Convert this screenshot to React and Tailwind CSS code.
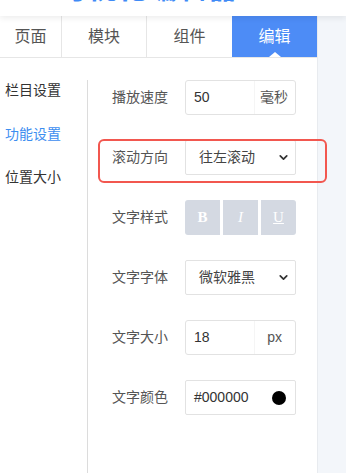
import { ChevronDown } from 'lucide-react'

const font = { fontFamily: '"Liberation Sans", "Noto Sans CJK SC", sans-serif' }

function Row({ label, children }) {
  return (
    <div className="flex items-center">
      <div className="w-[73px] text-[14px] text-[#555]">{label}</div>
      <div className="w-[111px] h-[35px]">{children}</div>
    </div>
  )
}

function UnitInput({ value, unit, pr }) {
  return (
    <div className="flex h-full border border-[#e2e2e2] rounded-[3px] text-[14px] text-[#333]">
      <div className="flex-1 flex items-center pl-[8px]">{value}</div>
      <div className={`w-[41px] flex items-center justify-end ${pr} border-l border-[#f5f5f5] text-[#555]`}>{unit}</div>
    </div>
  )
}

function FakeSelect({ value }) {
  return (
    <div className="flex items-center h-full border border-[#e2e2e2] rounded-[2px] pl-[13px] pr-[5px] text-[14px] text-[#444]">
      <span className="flex-1">{value}</span>
      <ChevronDown size={13} strokeWidth={3.2} className="text-[#333]" />
    </div>
  )
}

export default function App() {
  const tabs = [
    { name: '页面', w: 'w-[62px]' },
    { name: '模块', w: 'w-[85px]' },
    { name: '组件', w: 'w-[85px]' },
    { name: '编辑', w: 'w-[85px]', active: true }
  ]

  return (
    <div className="relative w-[346px] h-[473px] overflow-hidden bg-white flex flex-col" style={font}>
      <div className="relative z-10 h-4 overflow-hidden bg-white shadow-[0_2px_6px_rgba(0,0,0,0.08)]">
        <div className="mt-[-25px] pl-[58px] text-[29px] leading-[29px] font-bold text-[#3f8bf6] tracking-[1px] whitespace-nowrap">
          可视化编辑器
        </div>
      </div>

      <div className="flex flex-1">
        <div className="w-[317px] flex flex-col">
          <div className="flex h-[42px] border-b border-[#e6e6e6]">
            {tabs.map((t, i) => (
              <div
                key={t.name}
                className={`${t.w} relative flex items-center justify-center text-[16px] ${
                  t.active ? 'bg-[#4d8cf6] text-white' : 'text-[#555]'
                } ${i < 2 ? 'border-r border-[#e6e6e6]' : ''}`}
              >
                {t.name}
                {t.active && (
                  <div className="absolute bottom-0 left-1/2 -translate-x-1/2 w-0 h-0 border-x-[6px] border-x-transparent border-b-[5px] border-b-white" />
                )}
              </div>
            ))}
          </div>

          <div className="flex flex-1">
            <div className="w-[88px] mt-[22px] border-r border-[#dcdcdc] flex flex-col gap-[23.5px] pl-[5px] text-[14px] leading-[20px] text-[#333]">
              <div>栏目设置</div>
              <div className="text-[#3d8ef0]">功能设置</div>
              <div>位置大小</div>
            </div>

            <div className="flex flex-col gap-[25px] pl-[24px] pt-[22px]">
              <Row label="播放速度">
                <UnitInput value="50" unit="毫秒" pr="pr-[7px]" />
              </Row>
              <Row label="滚动方向">
                <FakeSelect value="往左滚动" />
              </Row>
              <Row label="文字样式">
                <div className="flex gap-[3px] h-full text-white text-[15px]" style={{ fontFamily: '"Liberation Serif", serif' }}>
                  <div className="flex-1 bg-[#d4d9e2] rounded-l-[3px] flex items-center justify-center font-bold">B</div>
                  <div className="flex-1 bg-[#d4d9e2] flex items-center justify-center italic">I</div>
                  <div className="flex-1 bg-[#d4d9e2] rounded-r-[3px] flex items-center justify-center underline">U</div>
                </div>
              </Row>
              <Row label="文字字体">
                <FakeSelect value="微软雅黑" />
              </Row>
              <Row label="文字大小">
                <UnitInput value="18" unit="px" pr="pr-[13px]" />
              </Row>
              <Row label="文字颜色">
                <div className="flex items-center h-full border border-[#e2e2e2] rounded-[2px] pl-[8px] pr-[9px] text-[14px] text-[#333]">
                  <span className="flex-1">#000000</span>
                  <span className="w-[14px] h-[14px] rounded-full bg-black" />
                </div>
              </Row>
            </div>
          </div>
        </div>

        <div className="flex-1 bg-[#f3f6fa] border-l border-[#e8ebef]" />
      </div>

      <div className="absolute left-[98px] top-[139px] w-[229px] h-[44px] border-2 border-[#f2574f] rounded-[6px]" />
    </div>
  )
}
